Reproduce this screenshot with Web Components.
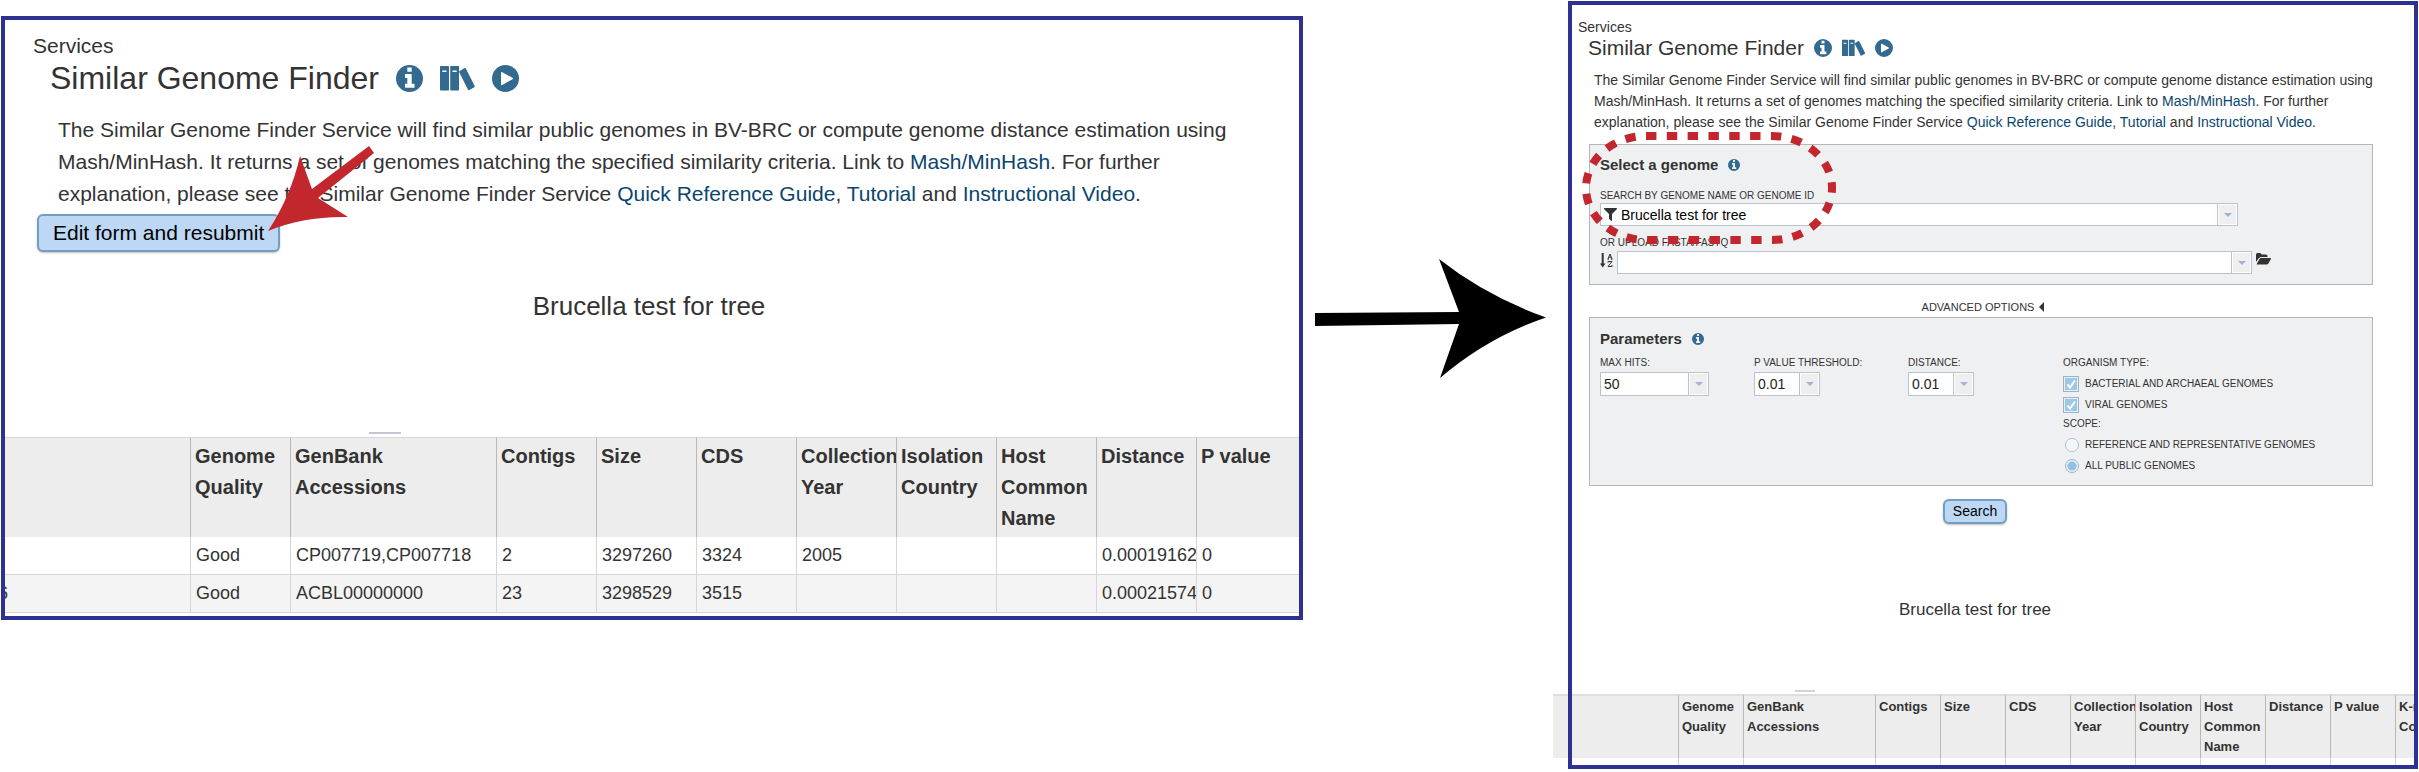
<!DOCTYPE html>
<html lang="en">
<head>
<meta charset="utf-8">
<title>Similar Genome Finder</title>
<style>
  html { background: #fff; }
  body { margin: 0; font-family: "Liberation Sans", Arial, sans-serif; color: #333; }
</style>
</head>
<body>
<workflow-page></workflow-page>

<template id="t-workflow-page">
  <style>
    :host { display: grid; grid-template-columns: minmax(0, 1302fr) 265px minmax(0, 850fr); align-items: start; padding: 1px 1px 0; }
    .results { margin-top: 15px; --text: 21px; --crumb-line: 26px; --line: 32px; --title: 32px; --title-line: 38px; --icon: 27px; --icon-gap: 17px;
      --pad-top: 13px; --crumb-x: 28px; --title-x: 45px; --intro-x: 53px; --intro-right: 40px; --intro-top: 17px;
      --job: 26px; --job-line: 30px; --job-space: 111px; --handle: 32px;
      --btn-pad: 14px; --btn-line: 34px; --head: 20px; --head-line: 31px; --cell-x: 4px; }
    .form { --text: 14px; --crumb-line: 18px; --line: 21px; --title: 21px; --title-line: 24px; --icon: 18px; --icon-gap: 10px;
      --pad-top: 13px; --crumb-x: 6px; --title-x: 16px; --intro-x: 22px; --intro-right: 14px; --intro-top: 10px;
      --job: 17px; --job-line: 20px; --job-space: 70px; --handle: 20px;
      --btn-pad: 8px; --btn-line: 21px; --head: 13px; --head-line: 20px; --cell-x: 3px; }
    .arrow { justify-self: start; margin: 258px 0 0 11px; display: block; }
    .resubmit { position: relative; display: inline-block; margin: 4px 0 39px 32px; }
    .pointer { position: absolute; right: -95px; top: -68px; pointer-events: none; }
    .centre { text-align: center; margin: 13px 36px 76px 0; }
    .results job-title { margin-right: 6px; }
    .form job-title { margin-right: 36px; }
    genome-form { margin: 11px 41px 0 17px; }
  </style>
  <framed-panel class="results">
    <service-intro></service-intro>
    <div class="resubmit">
      <push-button>Edit form and resubmit</push-button>
      <svg class="pointer" width="107" height="86" viewBox="0 0 107 86" aria-hidden="true">
        <path fill="#c1272d" d="M0 85 Q23 50 32 10 L44 43 L101 0 L106 7 L50 52 L80 71 Q36 70 0 85Z"/>
      </svg>
    </div>
    <job-title></job-title>
    <genome-table rows></genome-table>
  </framed-panel>
  <svg class="arrow" width="233" height="119" viewBox="0 0 233 119" aria-hidden="true">
    <path d="M1 54 L145 53 L125 0 Q172 37 232 58.500 Q174 78 126 119 L145 65 L1 67Z"/>
  </svg>
  <framed-panel class="form">
    <service-intro></service-intro>
    <genome-form></genome-form>
    <div class="centre"><push-button>Search</push-button></div>
    <job-title></job-title>
    <genome-table class="wide"></genome-table>
  </framed-panel>
</template>

<template id="t-framed-panel">
  <style>
    :host { display: block; border: 4px solid #2e3192; padding-top: var(--pad-top); min-width: 0; }
  </style>
  <slot></slot>
</template>

<template id="t-push-button">
  <style>
    :host { display: inline-block; vertical-align: top; }
    button { display: block; font: var(--text)/var(--btn-line) "Liberation Sans", Arial, sans-serif; color: #000; background: #bcd8f4; border: 2px solid #759dc0; border-radius: 6px; padding: 0 var(--btn-pad); box-shadow: 0 1px 2px rgba(0,0,0,.25); }
  </style>
  <button type="button"><slot></slot></button>
</template>

<template id="t-service-icon">
  <style>
    :host { display: block; }
    svg { display: block; height: var(--size, 27px); width: auto; fill: #336a90; }
  </style>
</template>

<template id="t-service-intro">
  <style>
    :host { display: block; }
    .crumb { font-size: var(--text); line-height: var(--crumb-line); padding-left: var(--crumb-x); }
    header { display: flex; align-items: center; gap: var(--icon-gap); padding-left: var(--title-x); }
    h1 { margin: 0; font-size: var(--title); line-height: var(--title-line); font-weight: 400; }
    a { color: #09456f; text-decoration: none; }
    service-icon { --size: var(--icon); }
    p { margin: var(--intro-top) var(--intro-right) 0 var(--intro-x); font-size: var(--text); line-height: var(--line); }
  </style>
  <div class="crumb">Services</div>
  <header>
    <h1>Similar Genome Finder</h1>
    <a href="#info" aria-label="Service information"><service-icon name="info"></service-icon></a>
    <a href="#guide" aria-label="Guides"><service-icon name="books"></service-icon></a>
    <a href="#video" aria-label="Video"><service-icon name="play"></service-icon></a>
  </header>
  <p>The Similar Genome Finder Service will find similar public genomes in BV-BRC or compute genome distance estimation using Mash/MinHash. It returns a set of genomes matching the specified similarity criteria. Link to <a href="#mash">Mash/MinHash</a>. For further explanation, please see the Similar Genome Finder Service <a href="#quick">Quick Reference Guide</a>, <a href="#tutorial">Tutorial</a> and <a href="#instructional">Instructional Video</a>.</p>
</template>

<template id="t-job-title">
  <style>
    :host { display: block; text-align: center; font-size: var(--job); line-height: var(--job-line); margin-bottom: var(--job-space); }
  </style>
  Brucella test for tree
</template>

<template id="t-genome-table">
  <style>
    :host { display: block; position: relative; z-index: -1; margin-left: -4px; padding-bottom: 3px; --first: 190px; --col: 100px; --bank: 206px; --head-pad: 3px; }
    :host(.wide) { margin-left: -19px; padding-bottom: 0; --first: 126px; --col: 65px; --bank: 132px; --head-pad: 1px; }
    .handle { width: var(--handle); height: 2px; margin: 0 0 3px 368px; background: #c3c8d6; }
    :host(.wide) .handle { margin: 0 0 2px 242px; background: #d0d4da; }
    .clip { overflow: hidden; }
    table { border-collapse: separate; border-spacing: 0; table-layout: fixed; width: 100%; }
    .c-first { width: var(--first); } .c { width: var(--col); } .c-bank { width: var(--bank); }
    th, td { box-sizing: border-box; text-align: left; overflow: hidden; white-space: nowrap; }
    th { background: #ededed; vertical-align: top; font-size: var(--head); line-height: var(--head-line); padding: var(--head-pad) 0 var(--head-pad) var(--cell-x); border-top: 1px solid #d6d6d6; border-right: 1px solid #b8b8b8; }
    :host(.wide) th { border-top-width: 2px; border-top-color: #dedede; }
    td { font-size: 18px; line-height: 37px; padding: 0 0 0 5px; border-right: 1px solid #d6d6d6; border-bottom: 1px solid #d6d6d6; }
    th:last-child, td:last-child { border-right: 0; }
    tr:nth-child(even) td { background: #f4f4f4; }
    td:first-child { padding: 0; text-indent: -3px; }
    :host(.wide) td { line-height: 7px; height: 7px; border-bottom: 0; padding: 0; }
  </style>
  <div class="handle"></div>
  <div class="clip">
    <table>
      <colgroup></colgroup>
      <thead><tr></tr></thead>
      <tbody></tbody>
    </table>
  </div>
</template>

<template id="t-combo-box">
  <style>
    :host { display: block; --edge: #b9c3d3; }
    label { display: block; font-size: 10px; line-height: var(--label-line, 14px); white-space: nowrap; text-transform: uppercase; }
    .box { box-sizing: border-box; display: grid; grid-template-columns: auto minmax(0, 1fr) 20px; align-items: stretch; height: var(--box, 23px); background: #fff; border: 1px solid var(--edge); }
    .box > svg { grid-area: 1 / 1; align-self: center; margin-left: 3px; fill: #333; }
    input, select { appearance: none; border: 0; outline: 0; background: none; margin: 0; padding: 0 0 0 3px; min-width: 0; width: 100%; border-radius: 0; font: 14px/20px "Liberation Sans", Arial, sans-serif; color: #222; }
    input { grid-area: 1 / 2; color: #000; padding-left: 4px; }
    select { grid-area: 1 / 1 / 2 / 4; }
    .drop { grid-area: 1 / 3; display: grid; place-items: center; padding: 0; border: 1px solid #fff; border-radius: 0; outline: 0; background: #efefef; box-shadow: -1px 0 0 var(--edge); margin-left: 1px; pointer-events: none; }
    .drop::before { content: ""; border: 4px solid transparent; border-top-color: #9fb4d8; border-bottom: 0; }
  </style>
</template>

<template id="t-choice-item">
  <style>
    :host { display: block; height: 21px; }
    label { display: flex; align-items: center; gap: 6px; height: 21px; font-size: 10px; text-transform: uppercase; white-space: nowrap; }
    input { appearance: none; box-sizing: border-box; width: 16px; height: 16px; margin: 0; flex: none; border: 1px solid #a3b1c6; background: #e9f1f8; }
    input[type=checkbox]:checked { background: url("data:image/svg+xml,%3Csvg xmlns='http://www.w3.org/2000/svg' viewBox='0 0 14 14'%3E%3Crect x='1' y='1' width='12' height='12' fill='%239cc8e6'/%3E%3Cpath d='M3.500 7.500l2.500 3 5-7' fill='none' stroke='%23fff' stroke-width='2'/%3E%3C/svg%3E") #e9f1f8; }
    input[type=radio] { width: 14px; height: 14px; margin-left: 2px; border: 1px solid #b4bcc9; border-radius: 50%; background: #f1f6fa; box-shadow: inset 0 0 0 1px #fff; }
    input[type=radio]:checked { background: radial-gradient(circle, #8fc3e4 0 4px, #e9f0f6 5px); box-shadow: none; border-color: #a3b1c6; }
  </style>
  <label><input><span><slot></slot></span></label>
</template>

<template id="t-genome-form">
  <style>
    :host { display: block; }
    section { position: relative; background: #eff0f2; border: 1px solid #b5b6b8; padding: 10px; }
    h2 { display: flex; align-items: center; gap: 10px; margin: 0; font-size: 15px; line-height: 20px; }
    service-icon { --size: 12px; }
    .search { margin: 14px 124px 10px 0; }
    .upload { display: flex; align-items: end; gap: 4px; margin-right: 91px; }
    .upload combo-box { flex: 1; min-width: 0; }
    .upload-label { display: block; font-size: 10px; line-height: 14px; margin-bottom: 1px; }
    .upload svg { flex: none; fill: #333; align-self: start; margin-top: 2px; }
    .ring { position: absolute; left: -8px; top: -13px; pointer-events: none; }
    .advanced { display: flex; justify-content: center; align-items: center; gap: 5px; width: 100%; margin: 12px 0 0; padding: 0 0 0 4px; border: 0; background: none; font: 11px/20px "Liberation Sans", Arial, sans-serif; color: #333; }
    .advanced::after { content: ""; border: 5px solid transparent; border-left: 0; border-right-color: #333; }
    .params { padding: 11px 10px 9px; }
    .grid { display: grid; grid-template-columns: 154px 154px 155px 1fr; margin-top: 5px; --label-line: 18px; --box: 24px; }
    .hits { width: 109px; } .small { width: 66px; }
    fieldset { border: 0; margin: 0; padding: 0; min-width: 0; }
    legend { padding: 0; margin-bottom: 1px; font-size: 10px; line-height: 18px; }
  </style>
  <section>
    <h2>Select a genome <service-icon name="info"></service-icon></h2>
    <combo-box class="search" label="Search by genome name or genome ID" value="Brucella test for tree" icon></combo-box>
    <span class="upload-label">OR UPLOAD FASTA/FASTQ</span>
    <div class="upload">
      <svg width="13" height="15" viewBox="0 0 13 15" aria-hidden="true">
        <path d="M1.700 0h2v10.500h1.800L2.700 14.500 0 10.500h1.700z"/>
        <path fill="none" stroke="#333" d="M7.500 6.200h1.500M10.800 6.200h1.700M8 6l2-5 2 5M8.800 4.200h2.500M8 9.800V8.500h4L8 13.500h4V12"/>
      </svg>
      <combo-box value="" aria="Upload FASTA or FASTQ"></combo-box>
      <svg width="15" height="12" viewBox="0 0 15 12" aria-hidden="true"><path d="M0 9V1.500Q0 0 1.500 0h2.500Q5.300 0 5.500 1.500H10Q11.500 1.500 11.500 3V4H5Q3.500 4 2.500 5.500ZM.7 11l2.800-5Q4 5 5 5h9.500q.8.300.3 1.200l-2.600 4.500q-.5.800-1.400.8H1Q.3 11.500.7 11Z"/></svg>
    </div>
    <svg class="ring" width="254" height="112" viewBox="0 0 254 112" aria-hidden="true">
      <rect x="4" y="4" width="246" height="104" rx="60" ry="52" fill="none" stroke="#c1272d" stroke-width="8" pathLength="464" stroke-dasharray="8 8"/>
    </svg>
  </section>
  <button type="button" class="advanced">ADVANCED OPTIONS</button>
  <section class="params">
    <h2>Parameters <service-icon name="info"></service-icon></h2>
    <div class="grid">
      <combo-box class="hits" label="Max hits:" options="50,100"></combo-box>
      <combo-box class="small" label="P value threshold:" options="0.01,0.1"></combo-box>
      <combo-box class="small" label="Distance:" options="0.01,0.1"></combo-box>
      <div>
        <fieldset>
          <legend>ORGANISM TYPE:</legend>
          <choice-item type="checkbox" checked>Bacterial and archaeal genomes</choice-item>
          <choice-item type="checkbox" checked>Viral genomes</choice-item>
        </fieldset>
        <fieldset>
          <legend>SCOPE:</legend>
          <choice-item type="radio">Reference and representative genomes</choice-item>
          <choice-item type="radio" checked>All public genomes</choice-item>
        </fieldset>
      </div>
    </div>
  </section>
</template>

<script>
  class Base extends HTMLElement {
    constructor() {
      super();
      const root = this.attachShadow({ mode: 'open' });
      root.append(document.getElementById('t-' + this.localName).content.cloneNode(true));
    }
  }

  const ICONS = {
    info: '<svg viewBox="0 0 27 27" aria-hidden="true"><path fill-rule="evenodd" d="M13.500 0a13.500 13.500 0 1 0 0 27a13.500 13.500 0 1 0 0-27ZM11.300 2.500H15.700V6.800H11.300ZM9 9H15.700V18.700H18.500V22.700H9V18.700H11.300V13H9Z"/></svg>',
    books: '<svg viewBox="0 0 35 27" aria-hidden="true"><path fill-rule="evenodd" d="M.8 1H8.200Q9 1 9 1.800V24.700Q9 25.500 8.200 25.500H.8Q0 25.500 0 24.700V1.800Q0 1 .8 1ZM2.300 5.500V7H6.500V5.500ZM11 1H18.200Q19 1 19 1.800V24.700Q19 25.500 18.200 25.500H11Q10.200 25.500 10.200 24.700V1.800Q10.200 1 11 1ZM12.500 5.500V7H16.700V5.500Z"/><path d="M19.400 6.200L24.600 3Q25.400 2.600 25.800 3.400L34.700 21Q35 21.800 34.300 22.200L29 25.200Q28.300 25.500 28 24.800L19.100 7Q18.900 6.500 19.400 6.200Z"/></svg>',
    play: '<svg viewBox="0 0 27 27" aria-hidden="true"><path fill-rule="evenodd" d="M13.500 0a13.500 13.500 0 1 0 0 27a13.500 13.500 0 1 0 0-27ZM9 8Q9 6.500 10.300 7.200L20.500 12.800Q21.700 13.500 20.500 14.200L10.300 20Q9 20.600 9 19.200Z"/></svg>'
  };

  customElements.define('service-icon', class extends Base {
    connectedCallback() {
      if (this.shadowRoot.querySelector('svg')) return;
      this.shadowRoot.querySelector('style').insertAdjacentHTML('afterend', ICONS[this.getAttribute('name')]);
    }
  });

  customElements.define('combo-box', class extends Base {
    connectedCallback() {
      if (this.shadowRoot.querySelector('.box')) return;
      const label = this.getAttribute('label');
      const options = this.getAttribute('options');
      const funnel = '<svg width="13" height="13" viewBox="0 0 13 13" aria-hidden="true"><path d="M.5 0h12q.8.400.3 1.200L8 6v6.500q-.4.700-1 .2L5 10.800V6L.2 1.200Q-.2.300.5 0Z"/></svg>';
      const control = options
        ? '<select id="f">' + options.split(',').map(o => '<option>' + o + '</option>').join('') + '</select><span class="drop"></span>'
        : (this.hasAttribute('icon') ? funnel : '') + '<input id="f" type="text"><button type="button" class="drop" aria-label="Open list"></button>';
      this.shadowRoot.querySelector('style').insertAdjacentHTML('afterend',
        (label ? '<label for="f">' + label + '</label>' : '') + '<div class="box">' + control + '</div>');
      const input = this.shadowRoot.querySelector('input');
      if (input) {
        input.value = this.getAttribute('value');
        if (!label) input.setAttribute('aria-label', this.getAttribute('aria'));
      }
    }
  });

  customElements.define('choice-item', class extends Base {
    connectedCallback() {
      const input = this.shadowRoot.querySelector('input');
      input.type = this.getAttribute('type');
      input.checked = this.hasAttribute('checked');
    }
  });

  const COLUMNS = ['', 'Genome<br>Quality', 'GenBank<br>Accessions', 'Contigs', 'Size', 'CDS', 'Collection<br>Year',
    'Isolation<br>Country', 'Host<br>Common<br>Name', 'Distance', 'P value'];
  const ROWS = [
    ['', 'Good', 'CP007719,CP007718', '2', '3297260', '3324', '2005', '', '', '0.00019162', '0'],
    ['6', 'Good', 'ACBL00000000', '23', '3298529', '3515', '', '', '', '0.00021574', '0']
  ];

  customElements.define('genome-table', class extends Base {
    connectedCallback() {
      const wide = this.classList.contains('wide');
      const names = wide ? [...COLUMNS, 'K-mer<br>Counts'] : COLUMNS;
      const rows = wide ? [names.map(() => '')] : ROWS;
      const find = s => this.shadowRoot.querySelector(s);
      find('colgroup').innerHTML = names.map((n, i) =>
        i === names.length - 1 ? '<col>' : '<col class="' + (i === 0 ? 'c-first' : i === 2 ? 'c-bank' : 'c') + '">').join('');
      find('thead tr').innerHTML = names.map(n => '<th scope="col">' + n + '</th>').join('');
      find('tbody').innerHTML = rows.map(r => '<tr>' + r.map(c => '<td>' + c + '</td>').join('') + '</tr>').join('');
    }
  });

  for (const name of ['push-button', 'job-title', 'service-intro', 'genome-form', 'framed-panel', 'workflow-page'])
    customElements.define(name, class extends Base {});
</script>
</body>
</html>
